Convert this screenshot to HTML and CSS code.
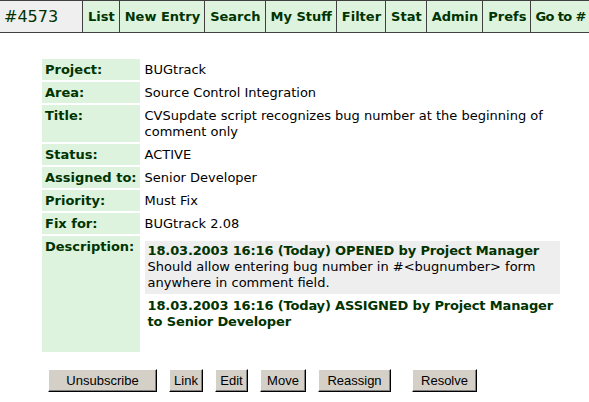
FILE: index.html
```html
<!DOCTYPE html>
<html lang="en">
<head>
  <meta charset="UTF-8">
  <title>BUGtrack #4573</title>
  <link rel="stylesheet" href="styles.css">
</head>
<body>
  <div class="navbar">
    <div class="bug-id">#4573</div>
    <a class="nav-item" href="#">List</a>
    <a class="nav-item" href="#">New Entry</a>
    <a class="nav-item" href="#">Search</a>
    <a class="nav-item" href="#">My Stuff</a>
    <a class="nav-item" href="#">Filter</a>
    <a class="nav-item" href="#">Stat</a>
    <a class="nav-item" href="#">Admin</a>
    <a class="nav-item" href="#">Prefs</a>
    <a class="nav-item last" href="#">Go to #</a>
  </div>

  <table class="details">
    <tr>
      <td class="label">Project:</td>
      <td class="value">BUGtrack</td>
    </tr>
    <tr>
      <td class="label">Area:</td>
      <td class="value">Source Control Integration</td>
    </tr>
    <tr>
      <td class="label">Title:</td>
      <td class="value">CVSupdate script recognizes bug number at the beginning of comment only</td>
    </tr>
    <tr>
      <td class="label">Status:</td>
      <td class="value">ACTIVE</td>
    </tr>
    <tr>
      <td class="label">Assigned to:</td>
      <td class="value">Senior Developer</td>
    </tr>
    <tr>
      <td class="label">Priority:</td>
      <td class="value">Must Fix</td>
    </tr>
    <tr>
      <td class="label">Fix for:</td>
      <td class="value">BUGtrack 2.08</td>
    </tr>
    <tr>
      <td class="label">Description:</td>
      <td class="value description">
        <div class="entry shaded">
          <div class="entry-head">18.03.2003 16:16 (Today) OPENED by Project Manager</div>
          Should allow entering bug number in #&lt;bugnumber&gt; form anywhere in comment field.
        </div>
        <div class="entry">
          <div class="entry-head">18.03.2003 16:16 (Today) ASSIGNED by Project Manager to Senior Developer</div>
        </div>
      </td>
    </tr>
  </table>

  <div class="actions">
    <button class="btn btn-unsub">Unsubscribe</button>
    <button class="btn btn-link">Link</button>
    <button class="btn btn-edit">Edit</button>
    <button class="btn btn-move">Move</button>
    <button class="btn btn-reassign">Reassign</button>
    <button class="btn btn-resolve">Resolve</button>
  </div>
</body>
</html>
```

FILE: styles.css
```css
body {
  margin: 0;
  font-family: "DejaVu Sans", Verdana, sans-serif;
  font-size: 13px;
  color: #000;
  background: #fff;
}

/* Top navigation */
.navbar {
  display: flex;
  height: 31px;
  border-top: 1px solid #404040;
  border-bottom: 1px solid #404040;
  white-space: nowrap;
  overflow: hidden;
}

.bug-id {
  width: 78px;
  flex: none;
  padding-left: 4px;
  background: #efefef;
  border-right: 1px solid #404040;
  color: #003300;
  font-size: 16px;
  line-height: 31px;
}

.nav-item {
  flex: none;
  padding: 0 4px 0 5px;
  background: #ddf3dd;
  border-right: 1px solid #404040;
  color: #003300;
  font-weight: bold;
  text-decoration: none;
  line-height: 31px;
}

.nav-item.last {
  flex: 1;
  padding-left: 4px;
  border-right: none;
  letter-spacing: -0.6px;
}

/* Bug details */
.details {
  margin: 24px 0 0 40px;
  width: 525px;
  border-spacing: 2px;
}

.details td {
  padding: 3px 3px 2px;
  line-height: 16px;
  vertical-align: top;
}

.label {
  width: 90px;
  background: #ddf3dd;
  color: #003300;
  font-weight: bold;
  white-space: nowrap;
}

.details td.description {
  padding-bottom: 19px;
}

.entry {
  padding: 2px 3px 3px;
  margin-top: 2px;
}

.entry.shaded {
  background: #eeeeee;
}

.entry-head {
  color: #003300;
  font-weight: bold;
  letter-spacing: -0.15px;
}

/* Buttons */
.actions {
  display: flex;
  gap: 12px;
  margin: 15px 0 0 48px;
}

.btn {
  height: 23px;
  padding: 0;
  font-family: "Liberation Sans", Arial, sans-serif;
  font-size: 13px;
  color: #000;
  background: #d4d0c8;
  border: 1px solid;
  border-color: #fff #000 #000 #fff;
  box-shadow: inset -1px -1px #808080;
}

.btn-unsub { width: 109px; }
.btn-link { width: 34px; }
.btn-edit { width: 33px; }
.btn-move { width: 46px; }
.btn-reassign { width: 73px; }

.btn-resolve {
  width: 65px;
  margin-left: 9px;
}
```
